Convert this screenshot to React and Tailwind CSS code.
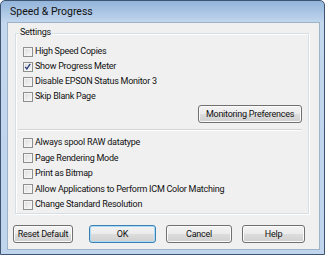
import React from "react";

const upper = [
  { label: "High Speed Copies", checked: false },
  { label: "Show Progress Meter", checked: true },
  { label: "Disable EPSON Status Monitor 3", checked: false },
  { label: "Skip Blank Page", checked: false },
];

const lower = [
  "Always spool RAW datatype",
  "Page Rendering Mode",
  "Print as Bitmap",
  "Allow Applications to Perform ICM Color Matching",
  "Change Standard Resolution",
];

function CheckBox({ checked }) {
  return (
    <span className="relative w-[10px] h-[10px] shrink-0 border border-[#8e8f8f] bg-[linear-gradient(135deg,#dcdcdc,#f9f9f9)] shadow-[inset_0_0_0_1px_#f4f4f4]">
      {checked && (
        <svg viewBox="0 0 10 10" className="absolute left-[0px] top-[0px] w-[8px] h-[8px]">
          <path d="M1.4 4.8 L3.6 7.4 L7.8 1.2" fill="none" stroke="#263c78" strokeWidth="1.6" />
        </svg>
      )}
    </span>
  );
}

function Row({ label, checked, h = "h-[15px]" }) {
  return (
    <div className={`flex items-center gap-[2px] ${h}`}>
      <CheckBox checked={checked} />
      <span className="leading-none">{label}</span>
    </div>
  );
}

function Button({ children, w, primary }) {
  return (
    <button
      className={`${w} h-[18px] rounded-[3px] border leading-none text-[#111] tracking-[-0.25px] ${
        primary
          ? "border-[#3c7fb1] shadow-[inset_0_0_0_1px_#a8dcf6]"
          : "border-[#707070] shadow-[inset_0_0_0_1px_#fbfbfb]"
      } bg-[linear-gradient(to_bottom,#f3f3f3_0%,#ebebeb_50%,#dddddd_50%,#cfcfcf_100%)]`}
    >
      {children}
    </button>
  );
}

export default function App() {
  return (
    <div
      className="w-[325px] h-[255px] flex flex-col border border-[#3f5470] rounded-t-[5px] bg-[linear-gradient(to_bottom,#93b4db_0px,#c3d7ee_22px,#bfd5ee_100%)] text-[9px] text-[#111] tracking-[-0.25px]"
      style={{ fontFamily: "Roboto, 'Liberation Sans', sans-serif" }}
    >
      {/* title */}
      <div className="h-[21px] pl-[9px] flex items-center text-[10.5px] tracking-[0px]">Speed &amp; Progress</div>

      {/* client area */}
      <div className="ml-[6px] mr-[4px] h-[228px] border border-[#9fb3c8] bg-[#f0f0f0] flex flex-col">
        <div className="relative ml-[7px] w-[294px] mt-[10px] h-[181px] border border-[#d5dfe5] shadow-[inset_1px_1px_0_#ffffff,1px_1px_0_#ffffff] pl-[7px] pr-[6px] pt-[10px]">
          <span className="absolute left-[3px] top-[-6px] px-[1px] bg-[#f0f0f0] leading-none">Settings</span>
          {upper.map((r) => (
            <Row key={r.label} label={r.label} checked={r.checked} />
          ))}
          <div className="flex justify-end mt-[1px]">
            <Button w="w-[104px]">Monitoring Preferences</Button>
          </div>
          <div className="ml-[-5px] mt-[6px] h-[2px] border-t border-[#d5d5d5] border-b border-b-[#ffffff]" />
          <div className="mt-[4px]">
            {lower.map((l) => (
              <Row key={l} label={l} h="h-[15.5px]" />
            ))}
          </div>
        </div>

        <div className="flex items-center ml-[5px] mt-[11px]">
          <Button w="w-[60px]">Reset Default</Button>
          <div className="ml-[16px]">
            <Button w="w-[67px]" primary>OK</Button>
          </div>
          <div className="ml-[10px]">
            <Button w="w-[66px]">Cancel</Button>
          </div>
          <div className="ml-[10px]">
            <Button w="w-[63px]">Help</Button>
          </div>
        </div>
      </div>
    </div>
  );
}
